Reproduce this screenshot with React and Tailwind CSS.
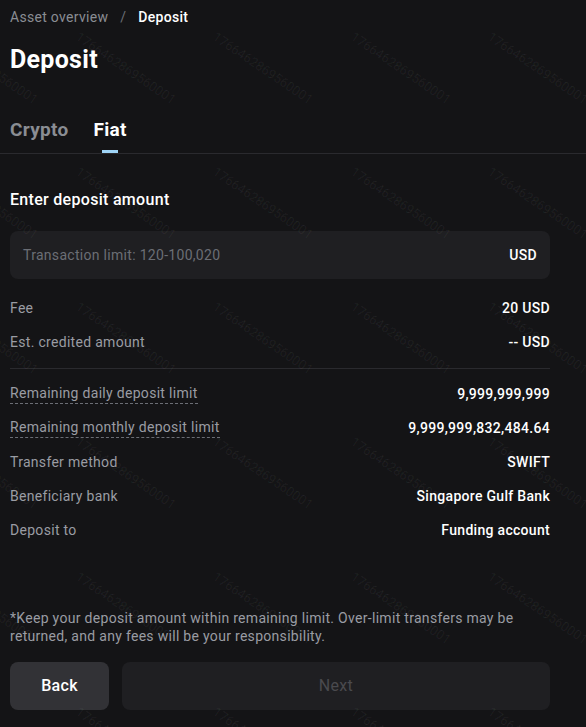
import React from "react";

const WATERMARK = "1766462869560001";

function Watermark() {
  const marks = [];
  for (let r = 0; r < 6; r++) {
    for (let c = 0; c < 5; c++) {
      marks.push({ left: -57 + c * 137.5, top: 30 + r * 135 });
    }
  }
  return (
    <div className="pointer-events-none absolute inset-0 overflow-hidden select-none">
      {marks.map((m, i) => (
        <span
          key={i}
          className="absolute origin-top-left rotate-[34deg] whitespace-nowrap text-[13px] leading-none tracking-normal text-white/[0.06]"
          style={{ left: m.left, top: m.top }}
        >
          {WATERMARK}
        </span>
      ))}
    </div>
  );
}

function Row({ label, value, dashed }) {
  return (
    <div className="flex h-[34px] items-center justify-between">
      <span
        className={
          dashed
            ? "border-b border-dashed border-[#6b6e75] pb-px leading-[18px] text-[#9a9ca3]"
            : "leading-5 text-[#9a9ca3]"
        }
      >
        {label}
      </span>
      <span className="font-medium text-white">{value}</span>
    </div>
  );
}

export default function App() {
  return (
    <div
      className="relative min-h-[727px] w-full overflow-hidden bg-[#141416] text-sm tracking-[0.3px]"
      style={{ fontFamily: "Roboto, 'Noto Sans', sans-serif" }}
    >
      <div className="pl-[10px] pr-[36px] pt-[7px]">
        <nav className="flex items-center leading-5">
          <span className="text-[#8a8d93]">Asset overview</span>
          <span className="mx-3 text-[#6b6e75]">/</span>
          <span className="font-medium text-white">Deposit</span>
        </nav>
        <h1 className="mt-[17px] text-[25px] font-bold leading-8 text-white">Deposit</h1>
      </div>

      <div className="mt-[42px] flex border-b border-[#2a2a2e] pl-[10px]">
        <div className="mr-[25px] pb-[11px] text-[19px] font-bold leading-6 text-[#8a8d93]">
          Crypto
        </div>
        <div className="flex flex-col items-center">
          <span className="text-[19px] font-bold leading-6 text-white">Fiat</span>
          <span className="mt-2 h-[3px] w-4 bg-[#9fd4f6]" />
        </div>
      </div>

      <div className="pl-[10px] pr-[36px]">
        <h2 className="mt-[34px] text-base font-medium leading-6 text-white">
          Enter deposit amount
        </h2>
        <div className="mt-[19px] flex h-12 items-center justify-between rounded-lg bg-[#1f1f22] px-[13px]">
          <span className="text-[#6b6e75]">Transaction limit: 120-100,020</span>
          <span className="font-medium text-white">USD</span>
        </div>

        <div className="mt-[12px]">
          <Row label="Fee" value="20 USD" />
          <Row label="Est. credited amount" value="-- USD" />
        </div>
        <div className="mt-[9px] border-t border-[#2a2a2e]" />
        <div className="mt-[8px]">
          <Row label="Remaining daily deposit limit" value="9,999,999,999" dashed />
          <Row label="Remaining monthly deposit limit" value="9,999,999,832,484.64" dashed />
          <Row label="Transfer method" value="SWIFT" />
          <Row label="Beneficiary bank" value="Singapore Gulf Bank" />
          <Row label="Deposit to" value="Funding account" />
        </div>

        <p className="mt-[62px] leading-[18px] text-[#9a9ca3]">
          *Keep your deposit amount within remaining limit. Over-limit transfers may be
          returned, and any fees will be your responsibility.
        </p>

        <div className="mt-[17px] flex gap-[13px] pb-4">
          <button className="h-12 w-[99px] rounded-lg bg-[#323236] text-base font-medium text-white">
            Back
          </button>
          <button className="h-12 flex-1 rounded-lg bg-[#1f1f22] text-base text-[#4a4a4e]">
            Next
          </button>
        </div>
      </div>

      <Watermark />
    </div>
  );
}
